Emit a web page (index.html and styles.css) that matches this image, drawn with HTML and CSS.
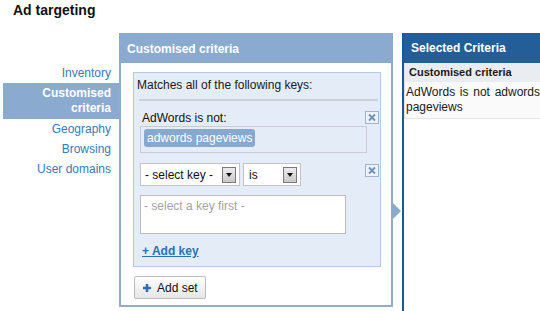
FILE: index.html
```html
<!DOCTYPE html>
<html>
<head>
<meta charset="utf-8">
<link rel="stylesheet" href="styles.css">
</head>
<body>
<h1 class="title">Ad targeting</h1>
<div class="layout">
  <nav class="nav">
    <a class="nav-item">Inventory</a>
    <a class="nav-item active">Customised<br>criteria</a>
    <a class="nav-item">Geography</a>
    <a class="nav-item">Browsing</a>
    <a class="nav-item">User domains</a>
  </nav>
  <section class="panel">
    <div class="panel-head">Customised criteria</div>
    <div class="set">
      <div class="set-title">Matches all of the following keys:</div>
      <div class="sep"></div>
      <div class="key">
        <div class="key-head">
          <span class="key-label">AdWords is not:</span>
          <span class="x-btn"><svg width="14" height="13" viewBox="0 0 14 13"><path d="M4 3.5 L10 9.5 M10 3.5 L4 9.5" stroke="#6f8fb6" stroke-width="1.8" fill="none"/></svg></span>
        </div>
        <div class="tokens"><span class="token">adwords pageviews</span></div>
      </div>
      <div class="sel-row">
        <div class="select sel-key"><span>- select key -</span><span class="dd"></span></div>
        <div class="select sel-op"><span>is</span><span class="dd"></span></div>
        <span class="x-btn x-right"><svg width="14" height="13" viewBox="0 0 14 13"><path d="M4 3.5 L10 9.5 M10 3.5 L4 9.5" stroke="#6f8fb6" stroke-width="1.8" fill="none"/></svg></span>
      </div>
      <div class="textarea">- select a key first -</div>
      <a class="add-key">+ Add key</a>
    </div>
    <button class="add-set"><svg class="plus" width="8" height="8" viewBox="0 0 8 8"><path d="M4 0 V8 M0 4 H8" stroke="#2f6eb6" stroke-width="2.6"/></svg>Add set</button>
  </section>
  <div class="arrow-col"><span class="arrow"></span></div>
  <aside class="selected">
    <div class="sel-head">Selected Criteria</div>
    <div class="sel-sub">Customised criteria</div>
    <div class="sel-item">AdWords is not adwords pageviews</div>
  </aside>
</div>
</body>
</html>
```
FILE: styles.css
```css
html, body {
  margin: 0;
  padding: 0;
  background: #fff;
}
body {
  font-family: "Liberation Sans", Arial, sans-serif;
  font-size: 12px;
  color: #1a1a1a;
  width: 540px;
  height: 311px;
  overflow: hidden;
}
.title {
  margin: 0;
  padding: 2px 0 0 13px;
  font-size: 14px;
  line-height: 17px;
  font-weight: bold;
  color: #111;
}
.layout {
  display: flex;
  margin-top: 14px;
  align-items: flex-start;
}
.nav {
  width: 119px;
  flex-shrink: 0;
  padding-top: 30px;
  display: flex;
  flex-direction: column;
}
.nav-item {
  margin-left: 3px;
  padding-right: 8px;
  text-align: right;
  line-height: 20px;
  color: #3a78bb;
}
.nav-item.active {
  background: #8aaacf;
  color: #fff;
  font-weight: bold;
  line-height: 15px;
  padding-top: 3px;
  padding-bottom: 3px;
}
.panel {
  width: 274px;
  height: 274px;
  box-sizing: border-box;
  border: 2px solid #8eacd0;
  flex-shrink: 0;
  background: #fff;
}
.panel-head {
  background: #8aaacf;
  color: #fff;
  font-weight: bold;
  height: 28px;
  line-height: 28px;
  padding-left: 6px;
  margin: -2px -2px 0 -2px;
  padding-top: 2px;
  padding-left: 8px;
}
.set {
  margin: 9px 10px 0 12px;
  border: 1px solid #b5cce9;
  background: #e4ecf8;
  padding: 5px 0 7px 0;
}
.set-title {
  line-height: 15px;
  padding-left: 3px;
}
.sep {
  margin: 6px 2px 0 5px;
  border-top: 2px solid #cdd1d6;
}
.key {
  padding: 0 1px 0 6px;
  margin-top: 10px;
}
.key-head {
  display: flex;
  justify-content: space-between;
  align-items: flex-start;
  height: 14px;
}
.key-label {
  line-height: 14px;
  padding-left: 2px;
  color: #111;
}
.x-btn {
  display: block;
  width: 14px;
  height: 13px;
  box-sizing: border-box;
  border: 1px solid #a3b3c8;
  background: #eef2f8;
  position: relative;
}
.x-btn svg {
  display: block;
  margin: -1px;
}
.tokens {
  margin-top: 1px;
  width: 227px;
  height: 27px;
  box-sizing: border-box;
  border: 1px solid #c8ccd2;
  padding: 2px 0 0 3px;
}
.token {
  display: inline-block;
  background: #87a8cf;
  color: #fff;
  border-radius: 3px;
  line-height: 18px;
  padding: 0 3px;
}
.sel-row {
  display: flex;
  align-items: flex-start;
  margin-top: 10px;
  padding: 0 1px 0 6px;
}
.select {
  display: flex;
  align-items: center;
  justify-content: space-between;
  height: 23px;
  box-sizing: border-box;
  border: 1px solid #c4c4c4;
  background: #fff;
  padding: 0 3px 0 4px;
  color: #111;
}
.sel-key {
  width: 100px;
}
.sel-op {
  width: 58px;
  margin-left: 3px;
  padding-left: 5px;
}
.dd {
  display: flex;
  align-items: center;
  justify-content: center;
  width: 14px;
  height: 16px;
  box-sizing: border-box;
  border: 1px solid #7a7a7a;
  background: linear-gradient(#ececec, #c9c9c9);
}
.dd::after {
  content: "";
  border-left: 3px solid transparent;
  border-right: 3px solid transparent;
  border-top: 4px solid #111;
}
.x-right {
  margin-left: auto;
  margin-top: 1px;
}
.textarea {
  margin: 9px 0 0 6px;
  width: 206px;
  height: 39px;
  box-sizing: border-box;
  border: 1px solid #bcbcbc;
  background: #fff;
  color: #a3a3a3;
  line-height: 14px;
  padding: 3px 0 0 3px;
}
.add-key {
  display: inline-block;
  margin: 10px 0 0 8px;
  line-height: 15px;
  font-weight: bold;
  color: #2a6fbd;
  text-decoration: underline;
}
.add-set {
  display: flex;
  align-items: center;
  margin: 9px 0 0 13px;
  width: 72px;
  height: 23px;
  box-sizing: border-box;
  border: 1px solid #bdbdbd;
  border-radius: 2px;
  background: linear-gradient(#ffffff, #e6e6e6);
  font-family: "Liberation Sans", Arial, sans-serif;
  font-size: 12px;
  color: #111;
  padding: 0 0 0 8px;
}
.plus {
  display: block;
  margin-right: 6px;
}
.arrow-col {
  width: 9px;
  height: 274px;
  display: flex;
  align-items: flex-start;
  flex-shrink: 0;
}
.arrow {
  display: block;
  margin-top: 169px;
  margin-left: -1px;
  border-top: 9px solid transparent;
  border-bottom: 9px solid transparent;
  border-left: 9px solid #8aaacf;
}
.selected {
  flex: 1;
  height: 280px;
  border-left: 2px solid #1d5893;
}
.sel-head {
  background: #245e98;
  color: #fff;
  font-weight: bold;
  height: 30px;
  line-height: 30px;
  padding-left: 7px;
}
.sel-sub {
  background: #e9edf2;
  border-left: 1px solid #dde2e8;
  height: 19px;
  line-height: 19px;
  padding-left: 4px;
  font-size: 11px;
  font-weight: bold;
  color: #1a1a1a;
}
.sel-item {
  background: #fafafa;
  border-left: 1px solid #e2e2e2;
  border-bottom: 1px solid #e6e6e6;
  padding: 3px 0 3px 1px;
  line-height: 15px;
  text-align: justify;
}
```
